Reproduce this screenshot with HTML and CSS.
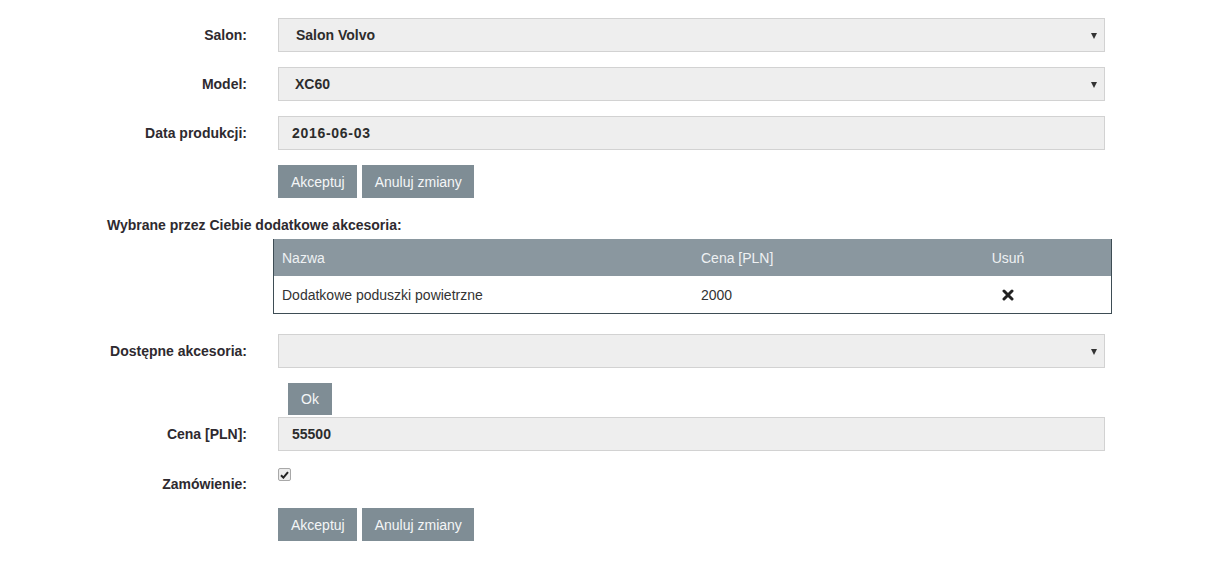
FILE: index.html
```html
<!DOCTYPE html>
<html lang="pl">
<head>
<meta charset="utf-8">
<title>Zamówienie</title>
<link rel="stylesheet" href="styles.css">
</head>
<body>
<div class="form">
  <div class="row">
    <label class="lbl">Salon:</label>
    <div class="field select sel-pad">Salon Volvo<span class="arrow"></span></div>
  </div>
  <div class="row">
    <label class="lbl">Model:</label>
    <div class="field select sel-pad2">XC60<span class="arrow"></span></div>
  </div>
  <div class="row">
    <label class="lbl">Data produkcji:</label>
    <div class="field date">2016-06-03</div>
  </div>
  <div class="btns">
    <button class="btn">Akceptuj</button>
    <button class="btn">Anuluj zmiany</button>
  </div>

  <div class="section-title">Wybrane przez Ciebie dodatkowe akcesoria:</div>
  <table class="acc">
    <thead>
      <tr><th class="c1">Nazwa</th><th class="c2">Cena [PLN]</th><th class="c3">Usuń</th></tr>
    </thead>
    <tbody>
      <tr>
        <td class="c1">Dodatkowe poduszki powietrzne</td>
        <td class="c2">2000</td>
        <td class="c3"><svg width="12" height="12" viewBox="0 0 12 12"><path d="M2 2 L10 10 M10 2 L2 10" stroke="#222" stroke-width="3" stroke-linecap="round"/></svg></td>
      </tr>
    </tbody>
  </table>

  <div class="row row-avail">
    <label class="lbl">Dostępne akcesoria:</label>
    <div class="field select"><span class="arrow"></span></div>
  </div>
  <div class="ok-wrap"><button class="btn btn-ok">Ok</button></div>
  <div class="row row-price">
    <label class="lbl">Cena [PLN]:</label>
    <div class="field">55500</div>
  </div>
  <div class="row row-order">
    <label class="lbl">Zamówienie:</label>
    <span class="check"><svg width="9" height="8" viewBox="0 0 9 8"><path d="M1 4.2 L3.4 6.6 L8 1.2" fill="none" stroke="#222" stroke-width="2"/></svg></span>
  </div>
  <div class="btns btns-last">
    <button class="btn">Akceptuj</button>
    <button class="btn">Anuluj zmiany</button>
  </div>
</div>
</body>
</html>
```

FILE: styles.css
```css
html, body {
  margin: 0;
  padding: 0;
  background: #fff;
}
body {
  font-family: "Liberation Sans", Arial, sans-serif;
  font-size: 14px;
  color: #333;
}
.form {
  padding: 18px 0 0 107px;
  width: 1005px;
  display: flex;
  flex-direction: column;
}
.row {
  display: flex;
  align-items: center;
  margin-bottom: 15px;
}
.lbl {
  width: 140px;
  text-align: right;
  font-weight: bold;
  color: #2e2a2f;
  margin-right: 31px;
  flex: none;
}
.field {
  box-sizing: border-box;
  width: 827px;
  height: 34px;
  background: #eeeeee;
  border: 1px solid #d2d2d2;
  font-weight: bold;
  color: #2c2c2c;
  padding: 0 13px;
  display: flex;
  align-items: center;
  position: relative;
}
.sel-pad { padding-left: 17px; }
.sel-pad2 { padding-left: 16px; }
.date { letter-spacing: 0.7px; }
.arrow {
  position: absolute;
  right: 7px;
  top: 14px;
  width: 0;
  height: 0;
  border-left: 3px solid transparent;
  border-right: 3px solid transparent;
  border-top: 6px solid #333;
}
.btns {
  display: flex;
  gap: 5px;
  padding-left: 171px;
}
.btn {
  font-family: "Liberation Sans", Arial, sans-serif;
  font-size: 14px;
  color: #f4f6f7;
  background: #7f8d95;
  border: none;
  height: 33px;
  padding: 0 12px 0 13px;
  margin: 0;
  cursor: pointer;
}
.section-title {
  font-weight: bold;
  color: #2e2a2f;
  margin-top: 19px;
  line-height: 16px;
}
.acc {
  margin: 6px 0 0 166px;
  width: 839px;
  border-collapse: collapse;
  border: 1px solid #3e4d55;
  border-top: none;
}
.acc th {
  background: #8a979f;
  color: #eef1f3;
  font-weight: normal;
  text-align: left;
  height: 37px;
  padding: 0 8px;
}
.acc td {
  height: 37px;
  padding: 0 8px;
  color: #333;
}
.acc .c1 { width: 403px; }
.acc .c2 { width: 230px; }
.acc th.c3, .acc td.c3 { text-align: center; padding-right: 42px; }
.acc td.c3 svg { display: block; margin: 0 auto; }
.row-avail { margin-top: 20px; margin-bottom: 15px; }
.ok-wrap {
  padding-left: 181px;
}
.btn-ok {
  height: 32px;
  padding: 0 13px;
}
.row-price { margin-top: 2px; margin-bottom: 0; }
.row-order {
  margin: 0;
  height: 57px;
  align-items: center;
}
.row-order .lbl { margin-top: 8px; }
.check {
  box-sizing: border-box;
  width: 13px;
  height: 13px;
  border: 1px solid #a8a8a8;
  border-radius: 2px;
  background: #ececec;
  display: flex;
  align-items: center;
  justify-content: center;
  margin-top: -10px;
}
.btns-last { margin-top: 0; }
```
